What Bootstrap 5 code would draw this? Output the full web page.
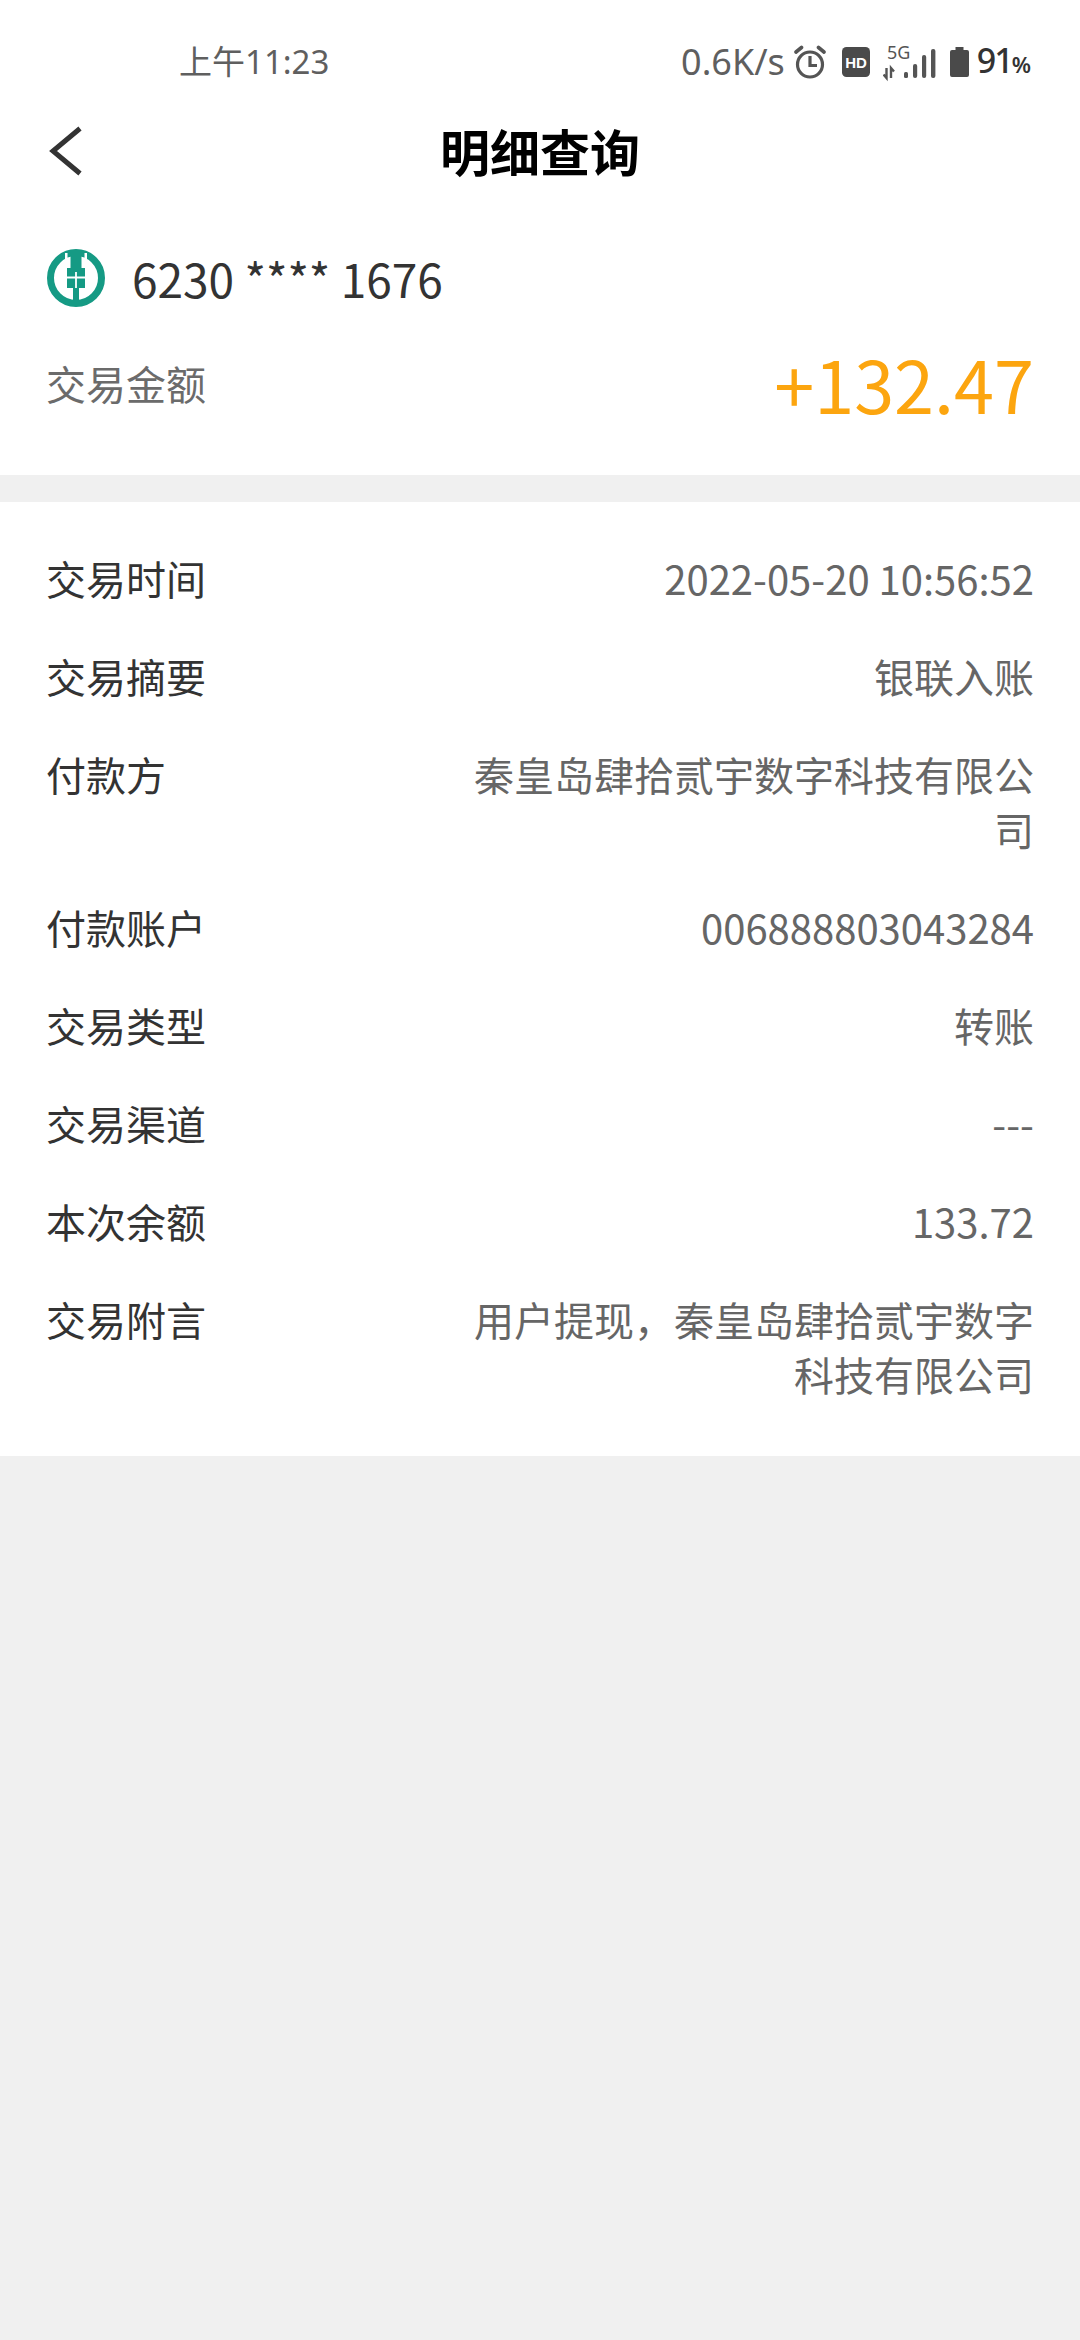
<!DOCTYPE html>
<html lang="zh-CN">
<head>
<meta charset="UTF-8">
<meta name="viewport" content="width=device-width, initial-scale=1.0">
<title>明细查询</title>
<link href="https://cdn.jsdelivr.net/npm/bootstrap@5.3.3/dist/css/bootstrap.min.css" rel="stylesheet">
<style>
    body {
        background-color: #f0f0f0;
        font-family: "Noto Sans CJK SC", "Noto Sans", sans-serif;
        height: 2340px;
    }
    .status-bar {
        height: 125px;
        padding: 38px 49px 0 179px;
        color: #5f5f5f;
        font-family: "Noto Sans", "Noto Sans CJK SC", sans-serif;
        line-height: 48px;
    }
    .status-time { font-size: 33px; }
    .status-icons { height: 48px; }
    .status-speed { font-size: 36px; }
    .alarm-icon { margin-left: 9px; }
    .hd-icon { margin-left: 16px; }
    .signal-icon { margin-left: 13px; }
    .battery-icon { margin-left: 13px; }
    .battery-text { color: #333; font-size: 34px; font-weight: 500; margin-left: 8px; letter-spacing: -2px; }
    .battery-text span { font-size: 22px; font-weight: 600; letter-spacing: 0; }
    .title-bar { height: 56px; padding: 0 46px; }
    .back-btn { left: 46px; top: 0; }
    .title-text { font-size: 50px; font-weight: 700; line-height: 50px; color: #000; }
    .summary-panel { padding: 67px 46px 0; height: 294px; }
    .bank-logo { margin-left: 1px; }
    .card-num { font-size: 46px; line-height: 60px; color: #333; margin-left: 27px; }
    .amount-row { margin-top: 27px; }
    .amount-label { font-size: 40px; color: #6b6b6b; }
    .amount-value { font-size: 72px; line-height: 96px; color: #fca50f; }
    .detail-panel { margin-top: 27px; padding: 27px 46px 33px; }
    .detail-row { padding: 21.5px 0; line-height: 55px; font-size: 40px; }
    .detail-row .row-label { color: #333; flex: 0 0 auto; }
    .detail-row .row-value { color: #666; text-align: right; width: 570px; }
</style>
</head>
<body>
    <div class="status-bar bg-white d-flex justify-content-between align-items-start">
        <div class="status-time">上午11:23</div>
        <div class="status-icons d-flex align-items-center">
            <span class="status-speed">0.6K/s</span>
            <svg class="alarm-icon" width="32" height="34" viewBox="0 0 32 34" fill="none" stroke="#555" stroke-width="3.200">
                <circle cx="16" cy="19.500" r="12.500"/>
                <path d="M16 11v9.500h7"/>
                <path d="M2 7l5.500-4.500M30 7l-5.500-4.500" stroke-linecap="round" stroke-width="3.600"/>
            </svg>
            <svg class="hd-icon" width="28" height="30" viewBox="0 0 28 30">
                <rect width="28" height="30" rx="4.500" fill="#4a4a4a"/>
                <text x="14" y="20.500" text-anchor="middle" font-family="Liberation Sans" font-size="15" font-weight="700" fill="#fff">HD</text>
            </svg>
            <svg class="signal-icon" width="54" height="44" viewBox="0 -4 54 44">
                <text x="4" y="15" font-family="Noto Sans" font-size="18" fill="#555">5G</text>
                <path d="M3.500 24v10L0.500 30.500M8 34V24l3 3.500" stroke="#555" stroke-width="2.400" fill="none"/>
                <rect x="21" y="28" width="4" height="6" rx="1.500" fill="#555"/>
                <rect x="30" y="20" width="4.200" height="14" rx="2" fill="#555"/>
                <rect x="39" y="11" width="4.200" height="23" rx="2" fill="#555"/>
                <rect x="48" y="5" width="4.400" height="29" rx="2" fill="#555"/>
            </svg>
            <svg class="battery-icon" width="19" height="30" viewBox="0 0 19 30">
                <path d="M5.500 0h8v3H17a2 2 0 0 1 2 2v23a2 2 0 0 1-2 2H2a2 2 0 0 1-2-2V5a2 2 0 0 1 2-2h3.500z" fill="#4a4a4a"/>
            </svg>
            <span class="battery-text">91<span>%</span></span>
        </div>
    </div>

    <div class="title-bar bg-white position-relative d-flex justify-content-center">
        <svg class="back-btn position-absolute" width="36" height="54" viewBox="0 0 36 54" fill="none" stroke="#333" stroke-width="5">
            <path d="M34 3.500L7 26l27 22.500"/>
        </svg>
        <div class="title-text">明细查询</div>
    </div>

    <div class="summary-panel bg-white">
        <div class="d-flex align-items-center">
            <svg class="bank-logo" width="58" height="58" viewBox="0 0 58 58">
                <circle cx="29" cy="29" r="25.500" fill="none" stroke="#159a84" stroke-width="7"/>
                <path d="M18 4h2.500v15H37.500V4H40v18h-2v17h-6.500v16h-5V39H20V22h-2z" fill="#fff"/>
                <path d="M20 19h18v20h-6v17h-6V39h-6z" fill="#159a84"/>
                <path d="M23.500 1h11v22h-11z" fill="#159a84"/>
                <path d="M20 28.500h18M29 23v16" stroke="#fff" stroke-width="1.800" fill="none"/>
            </svg>
            <div class="card-num">6230 **** 1676</div>
        </div>
        <div class="amount-row d-flex justify-content-between align-items-center">
            <div class="amount-label">交易金额</div>
            <div class="amount-value">+132.47</div>
        </div>
    </div>

    <div class="detail-panel bg-white">
        <div class="detail-row d-flex justify-content-between"><div class="row-label">交易时间</div><div class="row-value">2022-05-20 10:56:52</div></div>
        <div class="detail-row d-flex justify-content-between"><div class="row-label">交易摘要</div><div class="row-value">银联入账</div></div>
        <div class="detail-row d-flex justify-content-between"><div class="row-label">付款方</div><div class="row-value">秦皇岛肆拾贰宇数字科技有限公司</div></div>
        <div class="detail-row d-flex justify-content-between"><div class="row-label">付款账户</div><div class="row-value">006888803043284</div></div>
        <div class="detail-row d-flex justify-content-between"><div class="row-label">交易类型</div><div class="row-value">转账</div></div>
        <div class="detail-row d-flex justify-content-between"><div class="row-label">交易渠道</div><div class="row-value">---</div></div>
        <div class="detail-row d-flex justify-content-between"><div class="row-label">本次余额</div><div class="row-value">133.72</div></div>
        <div class="detail-row d-flex justify-content-between"><div class="row-label">交易附言</div><div class="row-value">用户提现，秦皇岛肆拾贰宇数字科技有限公司</div></div>
    </div>

    <script src="https://cdn.jsdelivr.net/npm/bootstrap@5.3.3/dist/js/bootstrap.bundle.min.js"></script>
</body>
</html>
